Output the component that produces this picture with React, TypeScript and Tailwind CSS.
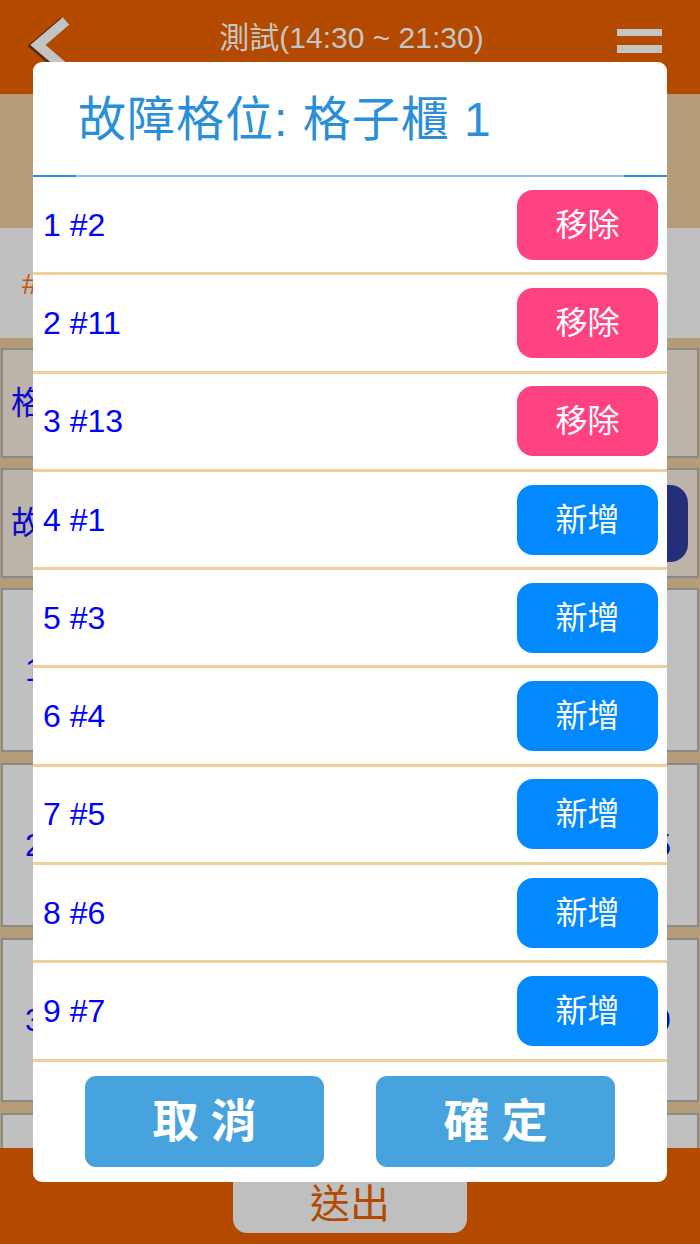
import React from 'react';

const cjk = { fontFamily: '"Liberation Sans", "Noto Sans CJK TC", sans-serif' };

interface Slot {
  no: number;
  cell: string;
  broken: boolean;
}

const slots: Slot[] = [
  { no: 1, cell: '#2', broken: true },
  { no: 2, cell: '#11', broken: true },
  { no: 3, cell: '#13', broken: true },
  { no: 4, cell: '#1', broken: false },
  { no: 5, cell: '#3', broken: false },
  { no: 6, cell: '#4', broken: false },
  { no: 7, cell: '#5', broken: false },
  { no: 8, cell: '#6', broken: false },
  { no: 9, cell: '#7', broken: false },
];

function BackChevron() {
  return (
    <svg width="48" height="56" viewBox="0 0 48 56">
      <polyline points="38,4 10,28 38,52" fill="none" stroke="#5a2a08" strokeWidth="11" strokeLinejoin="miter" transform="translate(-2,1)" />
      <polyline points="38,4 10,28 38,52" fill="none" stroke="#c4c4c4" strokeWidth="10" strokeLinejoin="miter" />
    </svg>
  );
}

function Background() {
  return (
    <div className="h-full flex flex-col">
      {/* header */}
      <div className="h-[94px] bg-[#b34a00] flex items-start justify-between shrink-0">
        <div className="ml-[28px] mt-[17px]">
          <BackChevron />
        </div>
        <div className="mt-[19px] text-[30px] leading-[38px] text-[#c6c6c6] ml-[10px]" style={cjk}>
          測試(14:30 ~ 21:30)
        </div>
        <div className="mr-[38px] mt-[29px] flex flex-col gap-[9px]">
          <div className="w-[45px] h-[7px] bg-[#c4c4c4]" />
          <div className="w-[45px] h-[8px] bg-[#c4c4c4]" />
        </div>
      </div>

      <div className="h-[134px] bg-[#b39c77] shrink-0" />

      <div className="h-[110px] bg-[#c0c0c0] shrink-0 pl-[22px] pt-[38px] text-[30px] leading-[36px] text-[#c0560c]" style={cjk}>
        #1
      </div>

      {/* cabinet list */}
      <div className="flex-1 bg-[#b39c77] px-[1px] pt-[10px] flex flex-col gap-[10px] overflow-hidden">
        <div className="h-[110px] shrink-0 bg-[#bcb4a8] border-2 border-[#8a8a8a] flex items-center pl-[8px] text-[32px] text-[#0a0acc]" style={cjk}>
          格子櫃 1
        </div>
        <div className="h-[110px] shrink-0 bg-[#bcb4a8] border-2 border-[#8a8a8a] flex items-center justify-between pl-[8px] pr-[9px] text-[32px] text-[#0a0acc]" style={cjk}>
          <span>故障格位</span>
          <div className="w-[140px] h-[77px] rounded-[18px] bg-[#232f78]" />
        </div>
        {[
          ['1', ''],
          ['2', '5'],
          ['3', '9'],
          ['4', '13'],
        ].map(([l, r]) => (
          <div key={l} className="h-[164px] shrink-0 mb-[1px] bg-[#c0c0c0] border-2 border-[#8a8a8a] flex items-center justify-between pl-[22px] pr-[26px] text-[32px] text-[#0a0acc]" style={cjk}>
            <span>{l}</span>
            <span>{r}</span>
          </div>
        ))}
      </div>

      {/* footer */}
      <div className="h-[96px] bg-[#b34a00] shrink-0 pt-[21px]">
        <div className="mx-auto w-[234px] h-[64px] rounded-[14px] bg-[#bfbfbf] flex items-center justify-center text-[40px] text-[#b34a00] pt-[6px]" style={cjk}>
          送出
        </div>
      </div>
    </div>
  );
}

export default function App() {
  return (
    <div className="relative w-[700px] h-[1244px] overflow-hidden">
      <Background />

      {/* dialog */}
      <div className="absolute left-[33px] top-[62px] w-[634px] h-[1120px] bg-white rounded-[9px] overflow-hidden flex flex-col">
        <div className="h-[113px] shrink-0 flex items-center pl-[45px] pt-[2px] text-[48px] tracking-[1px] text-[#2a8fd8]" style={cjk}>
          故障格位: 格子櫃 1
        </div>
        <div className="h-[2px] shrink-0 bg-[#2a8ed6] flex">
          <div className="flex-1 mx-[43px] bg-[#8cc4ea]" />
        </div>

        {slots.map(s => (
          <div
            key={s.no}
            className="h-[98.3px] shrink-0 border-b-[3px] border-[#efd09c] flex items-center justify-between pl-[10px] pr-[9px]"
          >
            <span className="text-[32px] text-[#0000ff]" style={{ fontFamily: '"Liberation Sans", sans-serif' }}>
              {s.no} {s.cell}
            </span>
            <button
              className={`w-[141px] h-[70px] rounded-[16px] text-white text-[32px] leading-none ${
                s.broken ? 'bg-[#ff4381]' : 'bg-[#0288ff]'
              }`}
              style={cjk}
            >
              {s.broken ? '移除' : '新增'}
            </button>
          </div>
        ))}

        <div className="flex-1 flex items-start justify-center gap-[52px] pt-[14px]">
          <button className="w-[239px] h-[91px] rounded-[11px] bg-[#46a3de] text-white text-[46px] font-bold tracking-[12px] pl-[12px]" style={cjk}>
            取消
          </button>
          <button className="w-[239px] h-[91px] rounded-[11px] bg-[#46a3de] text-white text-[46px] font-bold tracking-[12px] pl-[12px]" style={cjk}>
            確定
          </button>
        </div>
      </div>
    </div>
  );
}
